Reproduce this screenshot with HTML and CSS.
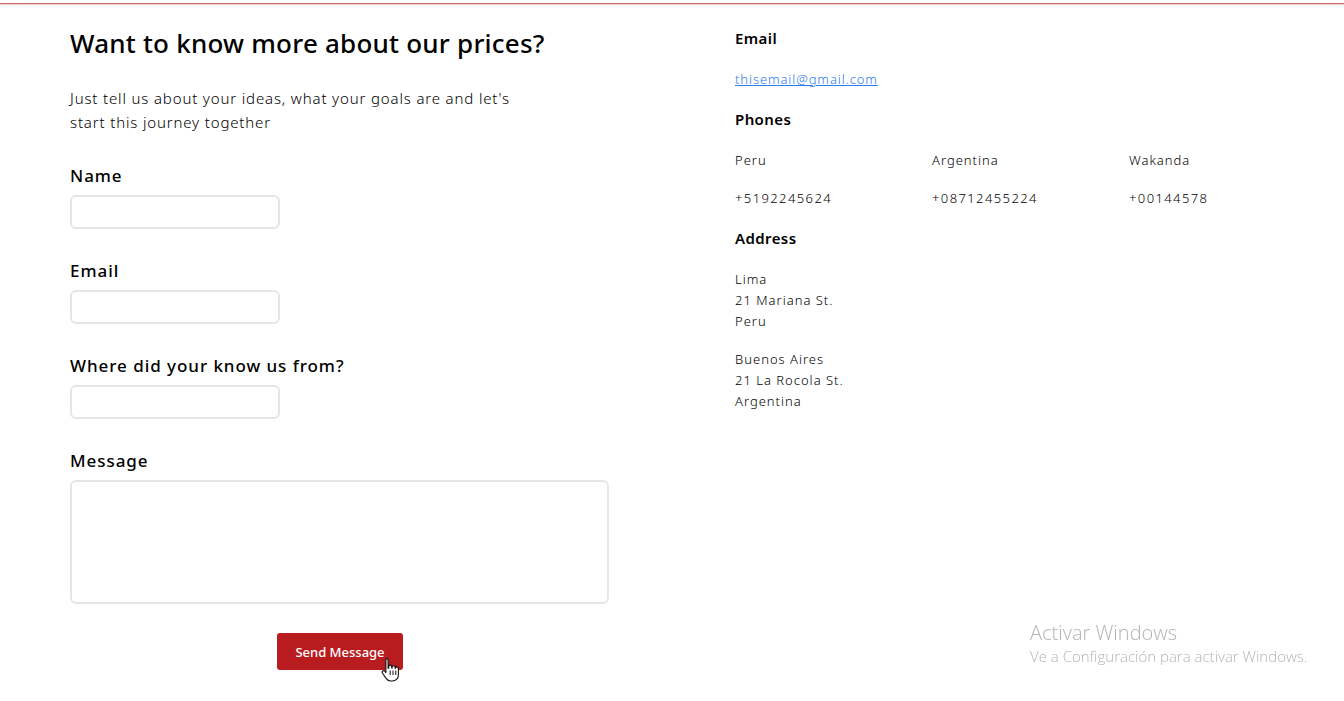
FILE: index.html
```html
<!DOCTYPE html>
<html lang="en">
<head>
<meta charset="utf-8">
<title>Contact</title>
<link rel="stylesheet" href="styles.css">
</head>
<body>
<div class="topbar"></div>
<main class="page">
  <section class="form-col">
    <h1 class="title">Want to know more about our prices?</h1>
    <p class="intro">Just tell us about your ideas, what your goals are and let's<br>start this journey together</p>
    <form class="form">
      <div class="field">
        <label class="label">Name</label>
        <input class="input" type="text">
      </div>
      <div class="field">
        <label class="label">Email</label>
        <input class="input" type="text">
      </div>
      <div class="field">
        <label class="label">Where did your know us from?</label>
        <input class="input" type="text">
      </div>
      <div class="field">
        <label class="label">Message</label>
        <textarea class="textarea"></textarea>
      </div>
      <div class="actions">
        <button class="btn" type="button">Send Message
          <svg class="cursor" width="20" height="26" viewBox="0 0 20 26">
            <path d="M5.5 1.5c1 0 1.6.7 1.6 1.6v8.2l.6-.1V9.6c0-.9.7-1.5 1.5-1.5s1.5.6 1.5 1.5v1.3h.4v-.6c0-.9.7-1.5 1.5-1.5s1.5.6 1.5 1.5v1h.4c0-.9.7-1.4 1.5-1.4s1.4.6 1.4 1.5v6.5c0 3.4-2.5 6.1-5.9 6.1H9.6c-1.8 0-3.2-.8-4.3-2.3L1.5 16.3c-.5-.8-.3-1.8.4-2.3.7-.5 1.7-.3 2.2.4l.8 1.2V3.1c0-.9.6-1.6 1.6-1.6z" fill="#fff" stroke="#111" stroke-width="1.1" stroke-linejoin="round"/>
            <path d="M9.2 13.5v4.5M12 13.5v4.5M14.8 13.5v4.5" stroke="#111" stroke-width="1" fill="none"/>
          </svg>
        </button>
      </div>
    </form>
  </section>
  <aside class="info-col">
    <h2 class="info-title">Email</h2>
    <a class="mail" href="#">thisemail@gmail.com</a>
    <h2 class="info-title">Phones</h2>
    <div class="phones">
      <div class="phone">
        <span class="country">Peru</span>
        <span class="number">+5192245624</span>
      </div>
      <div class="phone">
        <span class="country">Argentina</span>
        <span class="number">+08712455224</span>
      </div>
      <div class="phone">
        <span class="country">Wakanda</span>
        <span class="number">+00144578</span>
      </div>
    </div>
    <h2 class="info-title">Address</h2>
    <p class="address">Lima<br>21 Mariana St.<br>Peru</p>
    <p class="address">Buenos Aires<br>21 La Rocola St.<br>Argentina</p>
  </aside>
</main>
<div class="watermark">
  <div class="wm-title">Activar Windows</div>
  <div class="wm-sub">Ve a Configuración para activar Windows.</div>
</div>
</body>
</html>
```

FILE: styles.css
```css
* { box-sizing: border-box; }
html, body { margin: 0; padding: 0; background: #fff; }
body {
  font-family: "Noto Sans", "Open Sans", sans-serif;
  color: #000;
  height: 701px;
  overflow: hidden;
}
.topbar {
  margin-top: 3px;
  height: 1px;
  background: #c96a6a;
  box-shadow: 0 1px 1px rgba(230, 130, 130, 0.45);
}
.page {
  display: grid;
  grid-template-columns: 665px 1fr;
  padding-left: 70px;
}
.form-col { padding-top: 21px; }
.title {
  margin: 0;
  font-size: 26px;
  line-height: 36px;
  font-weight: 500;
  letter-spacing: 0.22px;
}
.intro {
  margin: 25px 0 0;
  font-size: 15px;
  line-height: 24px;
  font-weight: 300;
  letter-spacing: 0.85px;
}
.form { margin-top: 30px; display: flex; flex-direction: column; gap: 30px; }
.field { display: flex; flex-direction: column; gap: 7px; }
.label {
  font-size: 17px;
  line-height: 24px;
  font-weight: 500;
  letter-spacing: 0.95px;
}
.input {
  width: 210px;
  height: 34px;
  border: 2px solid #e5e6ea;
  border-radius: 6px;
  background: #fff;
  outline: none;
}
.textarea {
  width: 539px;
  height: 124px;
  border: 2px solid #e5e6ea;
  border-radius: 6px;
  resize: none;
  outline: none;
}
.actions { width: 540px; display: flex; justify-content: center; margin-top: -1px; }
.btn {
  position: relative;
  width: 126px;
  height: 37px;
  border: none;
  border-radius: 3px;
  background: #b81c1f;
  color: #fff;
  font-family: "Noto Sans", sans-serif;
  font-size: 13px;
  font-weight: 500;
  padding: 0;
}
.cursor { position: absolute; left: 104px; top: 24px; }
.info-col { padding-top: 24px; }
.info-title {
  margin: 0;
  font-size: 15px;
  line-height: 20px;
  font-weight: 600;
  letter-spacing: 0.4px;
}
.mail {
  display: block;
  margin: 21px 0 20px;
  font-size: 13px;
  line-height: 20px;
  letter-spacing: 0.9px;
  color: #2f7cf0;
  font-weight: 300;
}
.phones {
  display: grid;
  grid-template-columns: 197px 197px 1fr;
  margin: 21px 0 20px;
}
.phone { display: flex; flex-direction: column; gap: 18px; }
.country, .number {
  font-size: 13px;
  line-height: 20px;
  letter-spacing: 1px;
  font-weight: 300;
}
.number { letter-spacing: 1.4px; }
.address {
  margin: 21px 0 0;
  font-size: 13px;
  line-height: 21px;
  letter-spacing: 1px;
  font-weight: 300;
}
.address + .address { margin-top: 17px; }
.watermark {
  position: fixed;
  left: 1030px;
  top: 620px;
  color: #b4b4b4;
  font-family: "Open Sans", sans-serif;
  font-weight: 300;
}
.wm-title { font-size: 20px; line-height: 25px; }
.wm-sub { font-size: 15px; line-height: 22px; }
```
